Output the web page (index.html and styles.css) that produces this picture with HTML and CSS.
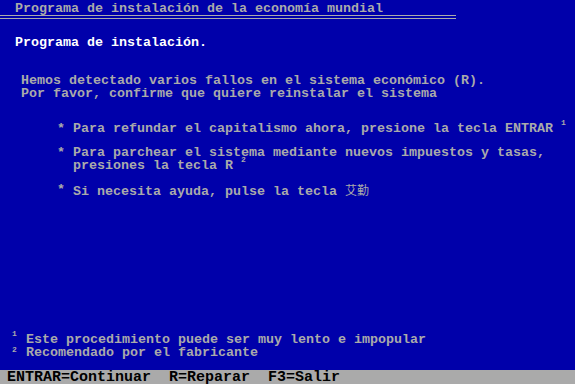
FILE: index.html
```html
<!DOCTYPE html>
<html lang="es">
<head>
  <meta charset="UTF-8">
  <title>Programa de instalación</title>
  <link rel="stylesheet" href="styles.css">
</head>
<body>

  <div class="screen">
    <div class="title">Programa de instalación de la economía mundial</div>
    <div class="rule"></div>

    <h1 class="heading">Programa de instalación.</h1>

    <p class="intro">Hemos detectado varios fallos en el sistema económico (R).<br>Por favor, confirme que quiere reinstalar el sistema</p>

    <ul class="options">
      <li><span class="star">*</span><span>Para refundar el capitalismo ahora, presione la tecla ENTRAR <span class="sup">1</span></span></li>
      <li><span class="star">*</span><span>Para parchear el sistema mediante nuevos impuestos y tasas,<br>presiones la tecla R <span class="sup">2</span></span></li>
      <li><span class="star">*</span><span>Si necesita ayuda, pulse la tecla <span class="cjk">艾勤</span></span></li>
    </ul>

    <div class="notes">
      <div class="note"><span class="mark mark-1">1</span>Este procedimiento puede ser muy lento e impopular</div>
      <div class="note"><span class="mark mark-2">2</span>Recomendado por el fabricante</div>
    </div>

    <div class="status">ENTRAR=Continuar  R=Reparar  F3=Salir</div>
  </div>

</body>
</html>
```

FILE: styles.css
```css
html, body {
  margin: 0;
  padding: 0;
  background-color: #0000aa;
}

body {
  font-family: "Liberation Mono", "DejaVu Sans Mono", monospace;
  font-size: 13.333px;
  font-weight: bold;
  line-height: 13px;
  color: #aaaaaa;
}

.screen {
  display: flex;
  flex-direction: column;
  height: 384px;
  overflow: hidden;
}

.title {
  padding: 2px 0 0 15px;
  white-space: nowrap;
}

.rule {
  width: 456px;
  height: 2px;
  border-top: 1px solid #aaaaaa;
  border-bottom: 1px solid #aaaaaa;
}

.heading {
  margin: 17px 0 0 0;
  padding-left: 15px;
  font-size: inherit;
  font-weight: bold;
  color: #ffffff;
}

.intro {
  margin: 25px 0 0 0;
  padding-left: 21px;
  white-space: nowrap;
}

.options {
  list-style: none;
  margin: 22px 0 0 0;
  padding: 0 0 0 57px;
}

.options li {
  display: flex;
  white-space: nowrap;
  margin-bottom: 11px;
}

.star {
  flex: 0 0 16px;
}

.sup {
  font-size: 8px;
  line-height: 0;
  vertical-align: 7px;
}

.cjk {
  font-family: "Noto Sans CJK SC", sans-serif;
  font-size: 12px;
  font-weight: normal;
}

.notes {
  margin-top: auto;
  padding-left: 12px;
}

.note {
  display: flex;
  white-space: nowrap;
}

.mark {
  flex: 0 0 14px;
  font-size: 8px;
  line-height: 0;
}

.mark-1 {
  margin-top: 1px;
}

.mark-2 {
  margin-top: 4px;
}

.status {
  margin-top: 11px;
  height: 13px;
  padding: 1px 0 0 7px;
  background-color: #aaaaaa;
  color: #000000;
  font-size: 15px;
  line-height: 13px;
  white-space: pre;
}
```
